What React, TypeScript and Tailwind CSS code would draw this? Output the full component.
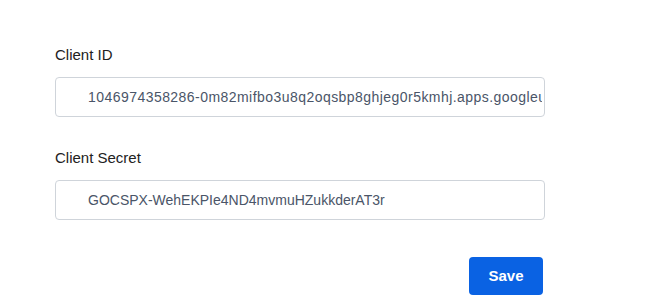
import { useState } from "react";

export default function App() {
  const [clientId, setClientId] = useState(
    "1046974358286-0m82mifbo3u8q2oqsbp8ghjeg0r5kmhj.apps.googleusercontent.com"
  );
  const [secret, setSecret] = useState("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");

  return (
    <div className="min-h-screen w-full bg-white font-['Liberation_Sans',Arial,sans-serif]">
      <div className="w-[490px] ml-[55px] pt-[45px] flex flex-col">
        <label className="text-[15px] leading-5 text-[#222]">Client ID</label>
        <input
          value={clientId}
          onChange={(e) => setClientId(e.target.value)}
          className="mt-3 h-10 w-full rounded border border-[#cfd4da] bg-white pl-8 pr-0.5 text-[14px] tracking-[0.45px] text-[#4a5568] outline-none"
        />

        <label className="mt-[31px] text-[15px] leading-5 text-[#222]">Client Secret</label>
        <input
          value={secret}
          onChange={(e) => setSecret(e.target.value)}
          className="mt-3 h-10 w-full rounded border border-[#cfd4da] bg-white pl-8 pr-0.5 text-[14px] text-[#4a5568] outline-none"
        />

        <div className="mt-[37px] flex justify-end pr-0.5">
          <button className="h-[38px] w-[74px] rounded bg-[#0a62e3] text-[15px] font-bold text-white">
            Save
          </button>
        </div>
      </div>
    </div>
  );
}
